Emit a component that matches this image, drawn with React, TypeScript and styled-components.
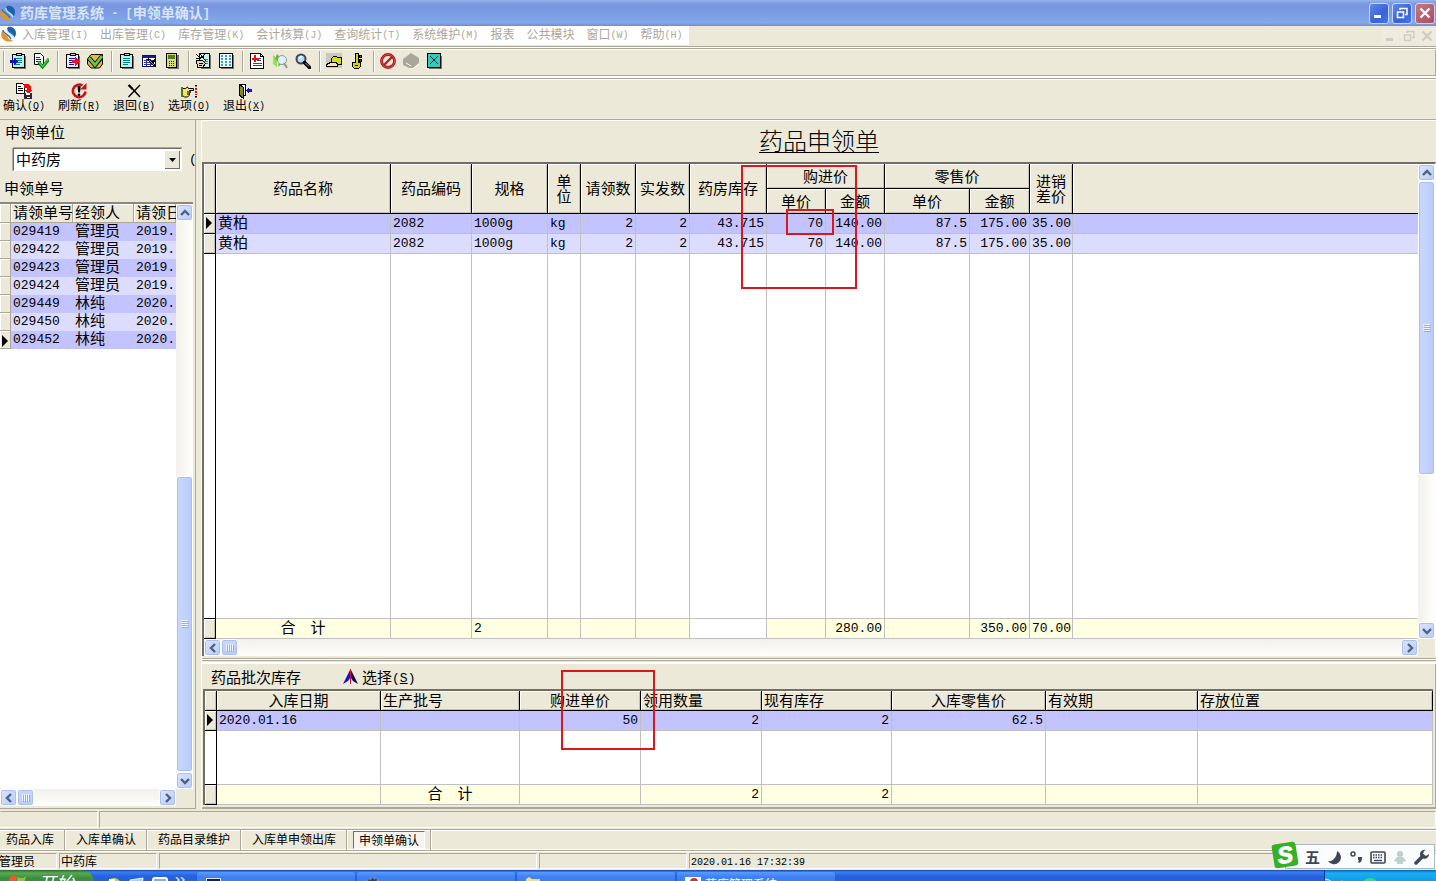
import React from 'react';
import styled, { createGlobalStyle, css } from 'styled-components';

const face = '#ece9d8';
const shade = '#aca899';
const cjk = "'Noto Sans CJK SC', 'Liberation Sans', sans-serif";
const mono = "'Liberation Mono', 'Noto Sans CJK SC', monospace";

const GlobalStyle = createGlobalStyle`
  * { box-sizing: border-box; }
  body { margin: 0; background: ${face}; font: 15px/18px ${cjk}; color: #000; }
  button, select { font: inherit; color: inherit; margin: 0; padding: 0; border: 0; background: none; }
`;

const Page = styled.div`
  display: flex;
  flex-direction: column;
  height: 100vh;
  min-height: 600px;
  overflow: hidden;
`;

const Latin = styled.span<{ $size?: number }>`
  font-family: ${mono};
  font-size: ${(p) => p.$size ?? 13}px;
  line-height: 0;
  vertical-align: 1px;
`;

/* ---------- title and menu ---------- */

const TitleBar = styled.header`
  display: flex;
  align-items: center;
  gap: 4px;
  flex: none;
  height: 26px;
  padding-right: 1px;
  background: linear-gradient(#96b4ee 0, #7a96df 4px, #7b9ae4 12px, #80a4e8 19px, #86a9ea 23px, #7089d4 26px);
  color: #d8e4f8;
  font-size: 14px;
`;

const TitleText = styled.h1`
  flex: 1;
  margin: 0;
  padding-bottom: 2px;
  font-size: 14px;
  font-weight: 700;
  white-space: pre;
`;

const CaptionButtons = styled.div`
  display: flex;
  gap: 3px;
`;

const CaptionButton = styled.button<{ $close?: boolean }>`
  display: flex;
  width: 20px;
  height: 21px;
  align-items: center;
  justify-content: center;
  border: 1px solid #c8d6f6;
  border-radius: 3px;
  background: ${(p) => (p.$close ? 'linear-gradient(135deg, #c4797f, #a94f61)' : 'linear-gradient(135deg, #5f87ea, #3a62d8 60%, #4478ee)')};
`;

const MenuBar = styled.nav`
  display: flex;
  justify-content: space-between;
  flex: none;
  height: 20px;
  padding-bottom: 1px;
`;

const MenuItems = styled.div`
  display: flex;
  align-items: center;
  gap: 12px;
  padding: 0 6px 3px 1px;
  background: #fff;
`;

const MenuItem = styled.button`
  color: #aca899;
  font-size: 12px;
  line-height: 16px;
  white-space: nowrap;
  &:first-of-type { margin-left: -7px; }
`;

const ChildControls = styled.div`
  display: flex;
  align-items: center;
  gap: 1px;
  padding-right: 1px;
`;

const ChildButton = styled.button`
  display: flex;
  width: 17px;
  height: 16px;
  align-items: center;
  justify-content: center;
  background: #efecdf;
`;

/* ---------- toolbars ---------- */

const IconBar = styled.div`
  display: flex;
  align-items: center;
  flex: none;
  height: 32px;
  padding-bottom: 3px;
  border-top: 1px solid ${shade};
  box-shadow: inset 0 1px #fff, inset 0 2px ${shade}, inset 0 3px #fff, inset 0 -2px #fff, inset 0 -3px ${shade}, inset -1px 0 ${shade};
`;

const Separator = styled.span`
  width: 2px;
  height: 21px;
  margin: 0 3px;
  border-left: 1px solid ${shade};
  border-right: 1px solid #fff;
`;

const IconButton = styled.button`
  display: flex;
  width: 23px;
  height: 22px;
  align-items: center;
  padding-left: 2px;
`;

const ActionBar = styled.div`
  display: flex;
  gap: 7px;
  flex: none;
  height: 42px;
  padding-top: 4px;
  border-top: 1px solid ${shade};
  border-bottom: 1px solid ${shade};
  box-shadow: inset 0 1px #fff;
`;

const ActionButton = styled.button`
  display: flex;
  width: 48px;
  flex-direction: column;
  align-items: center;
  font-size: 12px;
  line-height: 12px;
  white-space: nowrap;
`;

/* ---------- work area ---------- */

const Work = styled.main`
  display: flex;
  flex: 1;
  min-height: 0;
`;

const Side = styled.aside`
  display: flex;
  flex-direction: column;
  width: 196px;
  flex: none;
  padding-right: 2px;
  border-right: 1px solid ${shade};
  border-bottom: 1px solid ${shade};
  overflow: hidden;
`;

const SideLabel = styled.label`
  display: block;
  height: 28px;
  padding: 3px 0 0 5px;
`;

const SideHeading = styled.h2`
  height: 31px;
  margin: 0;
  padding: 8px 0 0 4px;
  font-size: 15px;
  font-weight: 400;
`;

const SelectRow = styled.div`
  display: flex;
  align-items: center;
  gap: 7px;
  padding-left: 13px;
`;

const SelectBox = styled.div`
  position: relative;
  width: 169px;
  flex: none;
  height: 23px;
  border: 1px solid #808080;
  border-color: #716f64 #fff #fff #716f64;
  box-shadow: 0 -1px ${shade}, -1px 0 ${shade};
  background: #fff;
  & select { width: 100%; height: 20px; padding-left: 2px; appearance: none; background: #fff; outline: 0; }
`;

const DropMark = styled.span`
  position: absolute;
  top: 1px;
  right: 1px;
  display: flex;
  width: 16px;
  height: 19px;
  align-items: center;
  justify-content: center;
  background: ${face};
  box-shadow: inset 1px 1px #fff, inset -1px -1px #716f64;
  pointer-events: none;
`;

const SideGrid = styled.div`
  display: grid;
  grid-template-columns: 1fr 17px;
  grid-template-rows: 1fr 17px;
  flex: 1;
  min-height: 0;
  margin-bottom: 2px;
  border-top: 2px solid #8b897c;
`;

const Paper = styled.div`
  min-width: 0;
  min-height: 0;
  overflow: hidden;
  background: #fff;
`;

const cellBase = css`
  padding: 0 2px;
  font-weight: 400;
  white-space: nowrap;
`;

const SideTable = styled.table`
  width: 100%;
  table-layout: fixed;
  border-spacing: 0;
  font-family: ${mono};
  & th, & td { ${cellBase} height: 18px; padding-top: 2px; line-height: 16px; text-align: left; }
  & th { height: 19px; padding-right: 0; background: ${face}; box-shadow: inset -1px -1px ${shade}, inset 1px 1px #fff; }
  & tbody tr { background: #dcdcff; }
  & tbody tr:nth-child(odd) { background: #c3c3ff; }
  & tbody th { height: 18px; }
`;

const Content = styled.section`
  display: flex;
  flex-direction: column;
  flex: 1;
  min-width: 0;
  margin-left: 5px;
  border-left: 1px solid #fff;
`;

const FormTitle = styled.h2`
  flex: none;
  height: 42px;
  margin: 0;
  padding-top: 5px;
  border-top: 1px solid #fff;
  font-size: 24px;
  font-weight: 300;
  line-height: 28px;
  text-align: center;
  text-decoration: underline;
  text-decoration-thickness: 1px;
  text-underline-offset: 2px;
`;

const MainGrid = styled.div`
  position: relative;
  display: grid;
  grid-template-columns: 1fr 17px;
  grid-template-rows: 1fr 17px;
  flex: 1;
  min-height: 0;
  border-top: 2px solid #716f64;
  border-left: 2px solid #716f64;
  border-right: 1px solid #fff;
`;

const DataTable = styled.table`
  width: 100%;
  height: 100%;
  table-layout: fixed;
  border-spacing: 0;
  & th, & td {
    ${cellBase}
    height: 20px;
    border-right: 1px solid #c0c0c0;
    border-bottom: 1px solid #c0c0c0;
  }
  & td {
    padding-top: 2px;
    font-family: ${mono};
    line-height: 16px;
  }
  & th {
    padding-bottom: 2px;
    background: ${face};
    border-color: #000;
    box-shadow: inset 1px 1px #fff, inset -1px -1px #c6c3b2;
    line-height: 15px;
  }
  & td:last-child { border-right-color: transparent; }
`;

const HeadRow = styled.tr<{ $tall?: boolean }>`
  & th { height: ${(p) => (p.$tall ? 25 : 20)}px; }
  & th[data-blank] { border-right: 0; box-shadow: inset 1px 1px #fff; }
`;

const BodyRow = styled.tr<{ $tone: string }>`
  & td { background: ${(p) => p.$tone}; }
`;

const Filler = styled.tr`
  & td { height: auto; background: #fff; }
  & td:first-child { border-color: #000; }
`;

const Cell = styled.td<{ $align?: string; $white?: boolean }>`
  && {
    text-align: ${(p) => p.$align ?? 'left'};
    ${(p) => p.$white && 'background: #fff;'}
  }
`;

const HeadCell = styled.th<{ $align?: string }>`
  && { text-align: ${(p) => p.$align ?? 'center'}; white-space: normal; }
`;

const Mark = styled.div<{ $x: number; $y: number; $w: number; $h: number }>`
  position: absolute;
  left: ${(p) => p.$x}px;
  top: ${(p) => p.$y}px;
  width: ${(p) => p.$w}px;
  height: ${(p) => p.$h}px;
  border: 2px solid #d8181c;
  pointer-events: none;
`;

const Splitter = styled.div`
  flex: none;
  height: 8px;
  border-bottom: 2px solid #fff;
  box-shadow: inset 0 2px ${face}, inset 0 3px ${shade}, inset 0 4px #fff, inset 0 5px ${shade};
`;

const Batch = styled.section`
  position: relative;
  display: flex;
  flex: none;
  flex-direction: column;
  height: 145px;
  padding: 0 2px 2px 1px;
  border-bottom: 2px solid ${shade};
  border-right: 1px solid ${shade};
`;

const BatchBar = styled.div`
  display: flex;
  align-items: center;
  gap: 42px;
  height: 25px;
  padding-left: 8px;
  & h3 { margin: 0; font-size: 15px; font-weight: 400; }
`;

const PickButton = styled.button`
  display: flex;
  align-items: center;
  gap: 4px;
`;

const BatchGrid = styled.div`
  flex: 1;
  min-height: 0;
  border-top: 2px solid #716f64;
  border-left: 2px solid #716f64;
  & td:last-child, & tbody tr td:last-child { border-right-color: #c0c0c0; }
`;

/* ---------- scroll bars ---------- */

const ScrollTrack = styled.div<{ $vertical?: boolean }>`
  display: flex;
  flex-direction: ${(p) => (p.$vertical ? 'column' : 'row')};
  background: linear-gradient(${(p) => (p.$vertical ? 'to right' : 'to bottom')}, #f3f1ec, #fefefb);
`;

const scrollPart = css`
  display: flex;
  align-items: center;
  justify-content: center;
  border: 1px solid #fff;
  border-radius: 3px;
  box-shadow: inset 0 0 0 1px #a9c0f4;
`;

const ScrollButton = styled.button`
  ${scrollPart}
  width: 17px;
  height: 17px;
  flex: none;
  background: linear-gradient(135deg, #dce6fe, #b9cbf9);
`;

const ScrollThumb = styled.div<{ $vertical?: boolean; $grow?: number }>`
  ${scrollPart}
  flex: ${(p) => (p.$grow ? `${p.$grow} 1 0` : 'none')};
  width: 17px;
  min-height: 17px;
  background: linear-gradient(${(p) => (p.$vertical ? 'to right' : 'to bottom')}, #c9d8fc, #b9ccfb);
`;

const ScrollSpace = styled.div<{ $grow: number }>`
  flex: ${(p) => p.$grow} 1 0;
`;

const paths = { up: 'M1 7l4-4 4 4', down: 'M1 3l4 4 4-4', left: 'M7 1 3 5l4 4', right: 'M3 1l4 4-4 4' };

const Arrow = ({ to }: { to: keyof typeof paths }) => (
  <svg width="10" height="10" viewBox="0 0 10 10" fill="none" stroke="#4d6185" strokeWidth="2.4">
    <path d={paths[to]} />
  </svg>
);

const Grip = ({ vertical }: { vertical?: boolean }) => (
  <svg width="8" height="8" viewBox="0 0 8 8" shapeRendering="crispEdges">
    {[0, 2, 4, 6].map((n) =>
      vertical ? (
        <g key={n}><path d={`M0 ${n + 0.5}h7`} stroke="#eef4fe" /><path d={`M1 ${n + 1.5}h7`} stroke="#8cb0f8" /></g>
      ) : (
        <g key={n}><path d={`M${n + 0.5} 0v7`} stroke="#eef4fe" /><path d={`M${n + 1.5} 1v7`} stroke="#8cb0f8" /></g>
      ),
    )}
  </svg>
);

const VerticalScroll = ({ before, size, after }: { before: number; size: number; after: number }) => (
  <ScrollTrack $vertical>
    <ScrollButton aria-label="向上滚动"><Arrow to="up" /></ScrollButton>
    <ScrollSpace $grow={before} />
    <ScrollThumb $vertical $grow={size}><Grip vertical /></ScrollThumb>
    <ScrollSpace $grow={after} />
    <ScrollButton aria-label="向下滚动"><Arrow to="down" /></ScrollButton>
  </ScrollTrack>
);

const HorizontalScroll = () => (
  <ScrollTrack>
    <ScrollButton aria-label="向左滚动"><Arrow to="left" /></ScrollButton>
    <ScrollThumb><Grip /></ScrollThumb>
    <ScrollSpace $grow={1} />
    <ScrollButton aria-label="向右滚动"><Arrow to="right" /></ScrollButton>
  </ScrollTrack>
);

/* ---------- bottom bars ---------- */

const panelEdge = css`
  border: 1px solid;
  border-color: ${shade} #fff #fff ${shade};
`;

const MessageStrip = styled.div`
  display: flex;
  gap: 1px;
  flex: none;
  height: 20px;
  padding: 2px 0 1px;
`;

const StripPane = styled.div<{ $width?: number }>`
  ${panelEdge}
  flex: ${(p) => (p.$width ? 'none' : '1')};
  width: ${(p) => (p.$width ? `${p.$width}px` : 'auto')};
  border-left-color: ${(p) => (p.$width ? 'transparent' : shade)};
`;

const TabBar = styled.div`
  display: flex;
  flex: none;
  height: 22px;
  border-top: 1px solid ${shade};
  border-bottom: 1px solid ${shade};
  box-shadow: inset 0 1px #fff, inset 0 -1px #fff;
`;

const Tab = styled.button`
  margin-right: 1px;
  padding: 0 10px 2px;
  border-right: 1px solid ${shade};
  box-shadow: 1px 0 #fff;
  font-size: 12px;
  line-height: 18px;
  white-space: nowrap;
  &:first-child { padding-left: 6px; }
`;

const ActiveTabSlot = styled.div`
  padding: 1px 5px;
  border-right: 1px solid ${shade};
  box-shadow: 1px 0 #fff;
`;

const ActiveTab = styled.button`
  display: block;
  width: 72px;
  height: 18px;
  border: 1px solid;
  border-color: #716f64 #fff #fff #716f64;
  background: #f6f4ec;
  font-size: 12px;
  line-height: 16px;
  white-space: nowrap;
`;

const StatusBar = styled.footer`
  position: relative;
  display: flex;
  gap: 2px;
  flex: none;
  height: 19px;
  padding: 1px 0 1px;
  border-top: 1px solid #fff;
`;

const StatusPane = styled.div<{ $width?: number }>`
  ${panelEdge}
  flex: ${(p) => (p.$width ? 'none' : '1')};
  width: ${(p) => (p.$width ? `${p.$width}px` : 'auto')};
  padding-left: 1px;
  font-size: 12px;
  line-height: 14px;
  white-space: nowrap;
  &:first-child { padding-left: 0; border-left: 0; margin-left: -1px; }
`;

const InputPanel = styled.div`
  position: absolute;
  right: 1px;
  bottom: 1px;
  display: flex;
  width: 150px;
  height: 25px;
  align-items: center;
  justify-content: space-between;
  padding: 0 4px 0 19px;
  border: 1px solid #a8b8c4;
  background: #fafcfd;
  color: #3f4657;
  font-size: 15px;
  font-weight: 700;
  line-height: 22px;
`;

const InputLogo = styled.div`
  position: absolute;
  left: -15px;
  top: -4px;
  width: 28px;
  height: 28px;
`;

const TaskBar = styled.div`
  display: flex;
  flex: none;
  height: 11px;
  overflow: hidden;
  background: linear-gradient(#1941a5 0, #3a80f0 2px, #2663e0 6px, #245edb 11px);
`;

const StartButton = styled.button`
  display: flex;
  width: 94px;
  height: 30px;
  padding: 0 0 0 8px;
  gap: 10px;
  border-radius: 0 12px 12px 0;
  background: linear-gradient(#2f6a30 0, #5aa855 3px, #3c8f3a 8px, #378a35 30px);
  color: #fff;
  font-size: 18px;
  font-style: italic;
  line-height: 24px;
`;

const QuickLaunch = styled.div`
  display: flex;
  width: 103px;
  padding: 7px 0 0 12px;
  gap: 7px;
`;

const TaskButton = styled.button`
  display: flex;
  width: 158px;
  height: 25px;
  margin: 2px 2px 0 0;
  padding: 4px 0 0 8px;
  gap: 4px;
  border-radius: 3px;
  background: linear-gradient(#5a9bff, #3c81f3 5px, #3c81f3);
  color: #fff;
  font-size: 12px;
  line-height: 16px;
`;

const Tray = styled.div`
  width: 112px;
  height: 30px;
  margin-left: auto;
  border-left: 1px solid #0c3a9a;
  background: linear-gradient(#0c60b8 0, #18b0f2 3px, #129be8 11px);
`;

/* ---------- drawings ---------- */

const Svg = ({ children, size = 16, soft }: { children: React.ReactNode; size?: number; soft?: boolean }) => (
  <svg width={size} height={size} viewBox="0 0 16 16" fill="none" shapeRendering={soft ? 'auto' : 'crispEdges'}>
    {children}
  </svg>
);

const Logo = () => (
  <Svg soft>
    <path d="M7 1c4-1 8 2 8 6 0 2-1 4-2 5 0-4-7-4-7-8 0-1 0-2 1-3z" fill="#1c63ac" />
    <path d="M6 3c-1 4 6 5 7 9" stroke="#bfe6f6" strokeWidth="1.4" />
    <path d="M2 4c-3 3-2 8 1 10 3 2 7 2 9 0-3 0-5-1-5-3C6 9 2 8 2 4z" fill="#e8932a" />
    <path d="M2 4c0 4 6 4 8 9" stroke="#2b79ba" strokeWidth="1.5" />
  </Svg>
);

const Board = ({ paper = '#b8f0f0', lines = '#0c8080' }: { paper?: string; lines?: string }) => (
  <>
    <path d="M4 3h12v13H4z" fill="#77756c" />
    <path d="M2.500 1.500h12v13h-12z" fill={paper} stroke="#000" />
    <path d="M6.500.5h5v2h-5z" fill="#c8d8e0" stroke="#000" />
    <path d="M5 5.500h7M5 7.500h7M5 9.500h7M5 11.500h5" stroke={lines} />
  </>
);

const Sheet = ({ paper = '#fff', lines = '#444' }: { paper?: string; lines?: string }) => (
  <>
    <path d="M1.500.5h10l3 3v12h-13z" fill={paper} stroke="#000" />
    <path d="M11.500.5v3h3" stroke="#000" />
    <path d="M8 5.500h4M8 7.500h4M4 10.500h9M4 12.500h9" stroke={lines} />
  </>
);

const toolIcons: { label: string; soft?: boolean; art: React.ReactNode }[][] = [
  [
    { label: '入库', art: <><Board /><path d="M0 7h4V4l4 4.500L4 13v-3H0z" fill="#1010c0" /></> },
    { label: '审核', soft: true, art: <><path d="M1.500.5h6l3 3v8h-9z" fill="#eef8f8" stroke="#000" /><path d="M3 4.500h4M3 6.500h5M3 8.500h5" stroke="#333" /><path d="M5.500 9l4 5L16 6" stroke="#0a7a18" strokeWidth="3" /><path d="M5.500 8.500l4 5L15.500 6" stroke="#3ccf40" strokeWidth="1.5" /></> },
  ],
  [
    { label: '出库', art: <><Board paper="#e8e8ff" lines="#1010c0" /><path d="M8 7h3V4l5 4.500-5 4.500v-3H8z" fill="#e81030" /></> },
    { label: '确认', soft: true, art: <><path d="M4 1.500h11.500V11l-3 4H4L.5 11V6z" fill="#e8b840" stroke="#000" /><path d="M2 5l6 7 7.500-9" stroke="#000" strokeWidth="4.500" /><path d="M2 5l6 7 7-9" stroke="#68c850" strokeWidth="2.800" /></> },
  ],
  [
    { label: '清单', art: <Board /> },
    { label: '编辑', art: <><path d="M1.500 2.500h13v11h-13z" fill="#fff" stroke="#101060" /><path d="M2 4h12" stroke="#1818a0" strokeWidth="2" /><path d="M3 7.500h10M3 9.500h10M3 11.500h10M5.500 6v7M9.500 6v7" stroke="#3030a0" /><path d="M7 6l8 8M14 7l-4 4" stroke="#000" strokeWidth="2" /><path d="M8 7l5 5" stroke="#30a8f8" /></> },
    { label: '计算', art: <><path d="M4 2h11v14H4z" fill="#77756c" /><path d="M2.500.5h10v14h-10z" fill="#d8e070" stroke="#000" /><path d="M4 2h7v4H4z" fill="#587828" /><path d="M5 8.500h6M5 10.500h6M5 12.500h6" stroke="#222" strokeDasharray="1 1" /></> },
  ],
  [
    { label: '填写', art: <><path d="M6 2h10v14H6z" fill="#77756c" /><path d="M4.500.5h10v14h-9z" fill="#d0f0f0" stroke="#000" /><path d="M10 6.500h3M9 8.500h4M9 10.500h4" stroke="#408080" /><path d="M1 1l5 5M4 0l7 8M10 1L5 6M1 6l8-3" stroke="#000" /><path d="M1.500 7.500h6l3 3-3 4h-5z" fill="#e8d8a0" stroke="#000" /><path d="M4 10h4M4 12h3" stroke="#000" /></> },
    { label: '表格', art: <><path d="M3 2h13v14H3z" fill="#77756c" /><path d="M1.500.5h13v14h-13z" fill="#f4fcff" stroke="#000" /><path d="M4 2v11M8 2v11M12 2v11" stroke="#30a0e8" strokeWidth="2" strokeDasharray="2 1" /></> },
  ],
  [
    { label: '处方', art: <><Sheet /><path d="M6 2v7M2.500 5.500h7" stroke="#e81010" strokeWidth="2" /></> },
    { label: '查找', soft: true, art: <><path d="M1 2l4 3v9l-4-3z" fill="#98e050" /><path d="M5 1l3 3-1 4 3 2-4 4 1-5-4-3z" fill="#60b840" /><circle cx="10" cy="7" r="4.500" fill="#e4f0f8" stroke="#8c9ca4" /><path d="M12 10l3 5" stroke="#909898" strokeWidth="2" /></> },
    { label: '搜索', soft: true, art: <><circle cx="6" cy="6" r="4.500" fill="#b8d8f8" stroke="#3c4460" strokeWidth="2" /><path d="M9.500 9.500l5 5" stroke="#000" strokeWidth="3.500" strokeLinecap="round" /><path d="M10.500 10l3.500 3.500" stroke="#999" /><path d="M4 6l3-3" stroke="#fff" strokeWidth="1.500" /></> },
  ],
  [
    { label: '打开', art: <><path d="M0 0h16v15H0z" fill="#cbc8bc" /><path d="M5.500 5.500l2-2h3l1 1h4v7h-10z" fill="#d8d820" stroke="#000" /><path d="M.5 13.500v-2l4-2h5l2 1v3z" fill="#f4e8b0" stroke="#000" /></> },
    { label: '权限', art: <><path d="M6.500.5h3v9h2v4l-2 2h-4l-2-2v-4h3z" fill="#d8d010" stroke="#000" /><path d="M10 2h2v2h-2zM10 6h2v2h-2z" fill="#6c6800" stroke="#000" /><path d="M6 12h3v1H6z" fill="#000" /></> },
  ],
  [
    { label: '停止', soft: true, art: <><circle cx="8" cy="8" r="6.500" stroke="#b01820" strokeWidth="2.800" /><circle cx="8" cy="8" r="6.500" stroke="#d84850" /><path d="M4 12l8-8" stroke="#b82028" strokeWidth="2.400" /></> },
    { label: '清除', soft: true, art: <><path d="M9 1l7 5v5l-6 5-9-3V8z" fill="#fff" /><path d="M8 0l8 5v5l-6 5H6l-6-3V6z" fill="#a9a69a" /><path d="M3 10l5 3" stroke="#fff" /></> },
    { label: '关闭', art: <><path d="M3 3h13v13H3z" fill="#77756c" /><rect x="1.500" y=".5" width="13" height="14" rx="1" fill="#38c8c0" stroke="#000" /><path d="M4 3l8 8M12 3l-8 8" stroke="#083838" /></> },
  ],
];

const actions: { text: string; key: string; soft?: boolean; art: React.ReactNode }[] = [
  { text: '确认', key: 'Q', art: <><path d="M.5.5h6l2 2v8h-8z" fill="#fff" stroke="#000" /><path d="M2 3.500h3M2 5.500h5M2 7.500h5" stroke="#000" /><path d="M8 1h4l3 3v3h1l-4 4-4-4h3V5H8z" fill="#e81010" /><path d="M8 10h8v6H8z" fill="#282838" /><path d="M10 10h4v2h-4zM11 14h3v1h-3z" fill="#fff" /></> },
  { text: '刷新', key: 'R', soft: true, art: <><path d="M11.500 2.500a6.300 6.300 0 1 0 3 6" stroke="#d01018" strokeWidth="2.600" /><path d="M9 6.500h6.500V0z" fill="#d01018" /><path d="M6.500 3h3.200L9 9.500H7.200z" fill="#000" /><circle cx="8" cy="11.800" r="1.300" fill="#000" /></> },
  { text: '退回', key: 'B', soft: true, art: <><path d="M3 2l11 12" stroke="#000" strokeWidth="1.600" /><path d="M14 2L2.500 14" stroke="#000" strokeWidth="1.400" /><path d="M2.500 2l4 4" stroke="#000" strokeWidth="2.200" /></> },
  { text: '选项', key: 'O', soft: true, art: <><path d="M1.500 5.500h3l2-1.500 1 1.500h5v2H8.500l1 1.500-1 1.500-.5 2-1.500 1.500h-3l-2-1.500z" fill="#f4e468" stroke="#000" /><path d="M0 4h2v10H0z" fill="#487820" /><path d="M6 9h3M6 11h3" stroke="#000" /><path d="M14 2h2v1.500h-2zM14 13h2v1.500h-2z" fill="#000" /><path d="M15 5v7" stroke="#c81010" strokeWidth="2" strokeDasharray="2 1" /></> },
  { text: '退出', key: 'X', art: <><path d="M4.500 1.500h5v11h-3" stroke="#000" fill="#fff" /><path d="M3 1l4 3v11l-4-3z" fill="#8a8820" stroke="#000" /><path d="M16 6h-3V4l-3 3.500 3 3.500V9h3z" fill="#1818b0" /></> },
];

const PointerMark = styled.svg`
  display: block;
`;

const Pointer = () => (
  <PointerMark width="7" height="12" viewBox="0 0 7 12"><path d="M0 0v12l6-6z" fill="#000" /></PointerMark>
);

/* ---------- data ---------- */

const menus: [string, string?][] = [
  ['入库管理', 'I'], ['出库管理', 'C'], ['库存管理', 'K'], ['会计核算', 'J'], ['查询统计', 'T'],
  ['系统维护', 'M'], ['报表'], ['公共模块'], ['窗口', 'W'], ['帮助', 'H'],
];

const requests = [
  ['029419', '管理员', '2019.'], ['029422', '管理员', '2019.'], ['029423', '管理员', '2019.'],
  ['029424', '管理员', '2019.'], ['029449', '林纯', '2020.'], ['029450', '林纯', '2020.'], ['029452', '林纯', '2020.'],
];

const itemWidths = [12, 175, 81, 76, 33, 55, 54, 77, 59, 59, 85, 60, 43];
const item = ['黄柏', '2082', '1000g', 'kg', '2', '2', '43.715', '70', '140.00', '87.5', '175.00', '35.00', ''];
const itemTotals = ['合　计', '', '2', '', '', '', '', '', '280.00', '', '350.00', '70.00', ''];
const batchWidths = [12, 164, 139, 121, 121, 130, 154, 152];
const batchHeads: [string, string][] = [
  ['入库日期', 'center'], ['生产批号', 'left'], ['购进单价', 'center'], ['领用数量', 'left'],
  ['现有库存', 'left'], ['入库零售价', 'center'], ['有效期', 'left'], ['存放位置', 'left'],
];
const batch = ['2020.01.16', '', '50', '2', '2', '62.5', '', ''];
const batchTotals = ['', '合　计', '', '2', '2', '', '', ''];

const isLatin = (s: string) => /^[\x20-\x7e]+$/.test(s);
const Value = ({ text }: { text: string }) => (isLatin(text) ? <Latin>{text}</Latin> : <>{text}</>);

const ItemTable = () => (
  <DataTable>
    <colgroup>{itemWidths.map((w, i) => <col key={i} width={w} />)}<col /></colgroup>
    <thead>
      <HeadRow $tall>
        <th rowSpan={2} />
        {['药品名称', '药品编码', '规格', '单位', '请领数', '实发数', '药房库存'].map((h) => <HeadCell key={h} rowSpan={2}>{h}</HeadCell>)}
        <HeadCell colSpan={2}>购进价</HeadCell>
        <HeadCell colSpan={2}>零售价</HeadCell>
        <HeadCell rowSpan={2}>进销差价</HeadCell>
        <th rowSpan={2} data-blank />
      </HeadRow>
      <HeadRow $tall>
        {['单价', '金额', '单价', '金额'].map((h, i) => <HeadCell key={i}>{h}</HeadCell>)}
      </HeadRow>
    </thead>
    <tbody>
      {['#c3c3ff', '#dcdcff'].map((tone, r) => (
        <BodyRow key={tone} $tone={tone}>
          <th>{r === 0 && <Pointer />}</th>
          {item.map((v, i) => <Cell key={i} $align={i < 4 ? 'left' : 'right'}><Value text={v} /></Cell>)}
        </BodyRow>
      ))}
      <Filler>{Array.from({ length: 14 }, (_, i) => <td key={i} />)}</Filler>
    </tbody>
    <tfoot>
      <BodyRow $tone="#ffffe1">
        <th />
        {itemTotals.map((v, i) => (
          <Cell key={i} $white={i === 6} $align={i === 0 ? 'center' : i === 2 ? 'left' : 'right'}><Value text={v} /></Cell>
        ))}
      </BodyRow>
    </tfoot>
  </DataTable>
);

const BatchTable = () => (
  <DataTable>
    <colgroup>{batchWidths.map((w, i) => <col key={i} width={w} />)}<col /></colgroup>
    <thead>
      <HeadRow>
        <th />
        {batchHeads.map(([h, a]) => <HeadCell key={h} $align={a}>{h}</HeadCell>)}
      </HeadRow>
    </thead>
    <tbody>
      <BodyRow $tone="#c3c3ff">
        <th><Pointer /></th>
        {batch.map((v, i) => <Cell key={i} $align={i === 0 ? 'left' : 'right'}><Value text={v} /></Cell>)}
      </BodyRow>
      <Filler>{Array.from({ length: 9 }, (_, i) => <td key={i} />)}</Filler>
    </tbody>
    <tfoot>
      <BodyRow $tone="#ffffe1">
        <th />
        {batchTotals.map((v, i) => <Cell key={i} $align={i === 1 ? 'center' : 'right'}><Value text={v} /></Cell>)}
      </BodyRow>
    </tfoot>
  </DataTable>
);

const WindowGlyph = ({ kind, color }: { kind: 'min' | 'restore' | 'close'; color: string }) => (
  <svg width="12" height="12" viewBox="0 0 12 12" fill="none" stroke={color}>
    {kind === 'min' && <path d="M1 9.500h7" strokeWidth="3" />}
    {kind === 'restore' && <><path d="M4 3V1.500h7v6H9" strokeWidth="1.500" /><path d="M1.500 5h6v5.500h-6zM1 5h7" strokeWidth="1.500" /></>}
    {kind === 'close' && <path d="M1.500 1.500l9 9M10.500 1.500l-9 9" strokeWidth="2.200" />}
  </svg>
);

export default function App() {
  return (
    <Page>
      <GlobalStyle />
      <TitleBar>
        <Logo />
        <TitleText>药库管理系统<Latin $size={12}> - [</Latin>申领单确认<Latin $size={12}>]</Latin></TitleText>
        <CaptionButtons>
          <CaptionButton aria-label="最小化"><WindowGlyph kind="min" color="#fff" /></CaptionButton>
          <CaptionButton aria-label="还原"><WindowGlyph kind="restore" color="#fff" /></CaptionButton>
          <CaptionButton $close aria-label="关闭"><WindowGlyph kind="close" color="#fff" /></CaptionButton>
        </CaptionButtons>
      </TitleBar>

      <MenuBar>
        <MenuItems>
          <Logo />
          {menus.map(([text, key]) => (
            <MenuItem key={text}>{text}{key && <Latin $size={10}>({key})</Latin>}</MenuItem>
          ))}
        </MenuItems>
        <ChildControls>
          {(['min', 'restore', 'close'] as const).map((k) => (
            <ChildButton key={k} aria-label={k}><WindowGlyph kind={k} color="#cfccc0" /></ChildButton>
          ))}
        </ChildControls>
      </MenuBar>

      <IconBar>
        {toolIcons.map((group, g) => (
          <React.Fragment key={g}>
            <Separator />
            {group.map((t) => <IconButton key={t.label} aria-label={t.label}><Svg soft={t.soft}>{t.art}</Svg></IconButton>)}
          </React.Fragment>
        ))}
      </IconBar>

      <ActionBar>
        {actions.map((a) => (
          <ActionButton key={a.key}>
            <Svg soft={a.soft}>{a.art}</Svg>
            <span>{a.text}<Latin $size={10}>(<u>{a.key}</u>)</Latin></span>
          </ActionButton>
        ))}
      </ActionBar>

      <Work>
        <Side>
          <SideLabel htmlFor="unit">申领单位</SideLabel>
          <SelectRow>
            <SelectBox>
              <select id="unit" defaultValue="中药房"><option>中药房</option></select>
              <DropMark><svg width="7" height="4" viewBox="0 0 7 4"><path d="M0 0h7L3.500 4z" /></svg></DropMark>
            </SelectBox>
            <Latin>(</Latin>
          </SelectRow>
          <SideHeading>申领单号</SideHeading>
          <SideGrid>
            <Paper>
              <SideTable>
                <colgroup><col width="11" /><col width="62" /><col width="61" /><col /></colgroup>
                <thead><tr><th /><th>请领单号</th><th>经领人</th><th>请领日</th></tr></thead>
                <tbody>
                  {requests.map(([no, who, date], i) => (
                    <tr key={no}>
                      <th>{i === 6 && <Pointer />}</th>
                      <td><Latin>{no}</Latin></td><td>{who}</td><td><Latin>{date}</Latin></td>
                    </tr>
                  ))}
                </tbody>
              </SideTable>
            </Paper>
            <VerticalScroll before={256} size={296} after={0} />
            <HorizontalScroll />
          </SideGrid>
        </Side>

        <Content>
          <FormTitle>药品申领单</FormTitle>
          <MainGrid>
            <Paper><ItemTable /></Paper>
            <VerticalScroll before={0} size={294} after={148} />
            <HorizontalScroll />
            <Mark $x={537} $y={1} $w={116} $h={124} />
            <Mark $x={582} $y={45} $w={48} $h={26} />
          </MainGrid>
          <Splitter />
          <Batch>
            <BatchBar>
              <h3>药品批次库存</h3>
              <PickButton>
                <svg width="15" height="16" viewBox="0 0 15 16"><path d="M7.500 0L0 15l5-3 2-3z" fill="#1010e0" /><path d="M7.500 0L15 15l-5-3-2-3z" fill="#080850" /><path d="M7.500 0v15" stroke="#d01030" /></svg>
                <span>选择<Latin>(<u>S</u>)</Latin></span>
              </PickButton>
            </BatchBar>
            <BatchGrid><BatchTable /></BatchGrid>
            <Mark $x={359} $y={6} $w={94} $h={80} />
          </Batch>
        </Content>
      </Work>

      <MessageStrip><StripPane $width={98} /><StripPane /></MessageStrip>

      <TabBar>
        {['药品入库', '入库单确认', '药品目录维护', '入库单申领出库'].map((t) => <Tab key={t}>{t}</Tab>)}
        <ActiveTabSlot><ActiveTab>申领单确认</ActiveTab></ActiveTabSlot>
      </TabBar>

      <StatusBar>
        <StatusPane $width={58}>管理员</StatusPane>
        <StatusPane $width={98}>中药库</StatusPane>
        <StatusPane $width={378} />
        <StatusPane $width={148} />
        <StatusPane><Latin $size={10}>2020.01.16 17:32:39</Latin></StatusPane>
        <InputPanel>
          <InputLogo>
            <svg width="28" height="28" viewBox="0 0 28 28">
              <g transform="rotate(-9 14 14)">
                <rect x="2" y="2" width="24" height="24" rx="3" fill="#35b027" />
                <text x="14" y="22" textAnchor="middle" fontFamily="Liberation Sans, sans-serif" fontSize="23" fontWeight="700" fontStyle="italic" fill="#fff" stroke="#fff">S</text>
              </g>
            </svg>
          </InputLogo>
          五
          <Svg soft><path d="M11 2a7 7 0 1 1-9 10c5 1 9-4 9-10z" fill="#3f4657" /></Svg>
          <Svg soft><circle cx="5" cy="5" r="2" stroke="#3f4657" strokeWidth="1.500" /><path d="M10 8h4c0 4-1 5-3 6l-1-1 1-2h-1z" fill="#3f4657" /></Svg>
          <Svg soft><rect x="1" y="3" width="14" height="11" rx="1" stroke="#3f4657" strokeWidth="1.600" /><path d="M3 6h10M3 8.500h10" stroke="#3f4657" strokeWidth="1.400" strokeDasharray="1.500 1" /><path d="M4 11.500h8" stroke="#3f4657" strokeWidth="1.400" /></Svg>
          <Svg soft><circle cx="8" cy="5" r="3" fill="#bfd0cc" /><path d="M5 8h6l3 4-2 1-1-1v3H5v-3l-1 1-2-1z" fill="#bfd0cc" /></Svg>
          <Svg soft><path d="M2 14l7-7" stroke="#3f4657" strokeWidth="3.500" strokeLinecap="round" /><path d="M12 1a4.500 4.500 0 1 0 3 4l-3 2-3-2 1-3z" fill="#3f4657" /></Svg>
        </InputPanel>
      </StatusBar>

      <TaskBar>
        <StartButton>
          <svg width="20" height="20" viewBox="0 0 20 20"><path d="M2 7q4-3 7 0l-2 7q-3-3-7 0z" fill="#f0582a" /><path d="M10 7q4 3 8-1l-2 8q-4 2-8 0z" fill="#8cc63e" /></svg>
          开始
        </StartButton>
        <QuickLaunch>
          <Svg soft><circle cx="8" cy="8" r="7" fill="#b8d838" /><path d="M3 3h6" stroke="#fff" strokeWidth="2" /></Svg>
          <Svg soft><path d="M1 3l13-2-2 14H2z" fill="#9cd4f8" stroke="#e8f6ff" /></Svg>
          <Svg soft><rect x="1" y="1" width="14" height="13" rx="2" fill="#6cb4f0" stroke="#fff" strokeWidth="2" /></Svg>
          <Svg soft><path d="M1 0l3 3-3 3M6 0l3 3-3 3" stroke="#d0e4ff" strokeWidth="1.500" /></Svg>
        </QuickLaunch>
        <TaskButton aria-label="终端"><Svg><path d="M1 2h14v12H1z" fill="#082078" stroke="#e0e0e0" /></Svg></TaskButton>
        <TaskButton aria-label="工具"><Svg soft><circle cx="8" cy="8" r="6" fill="#38405c" stroke="#8090a8" strokeDasharray="2 2" strokeWidth="2" /></Svg></TaskButton>
        <TaskButton aria-label="文件夹"><Svg soft><path d="M1 3l3-2 3 2h8v11H1z" fill="#f8dc70" /></Svg></TaskButton>
        <TaskButton><Svg soft><path d="M0 1h16v15H0z" fill="#fff" /><circle cx="9" cy="6" r="4" fill="#d83028" /></Svg>药库管理系统</TaskButton>
        <Tray>
          <svg width="60" height="11" viewBox="0 0 60 11"><circle cx="0" cy="14" r="9" fill="#58a8e8" stroke="#e0f4ff" /><path d="M10 11l7-4 8 4z" fill="#b8d838" stroke="#fff" /><circle cx="45" cy="14" r="10" fill="#28e080" /></svg>
        </Tray>
      </TaskBar>
    </Page>
  );
}
